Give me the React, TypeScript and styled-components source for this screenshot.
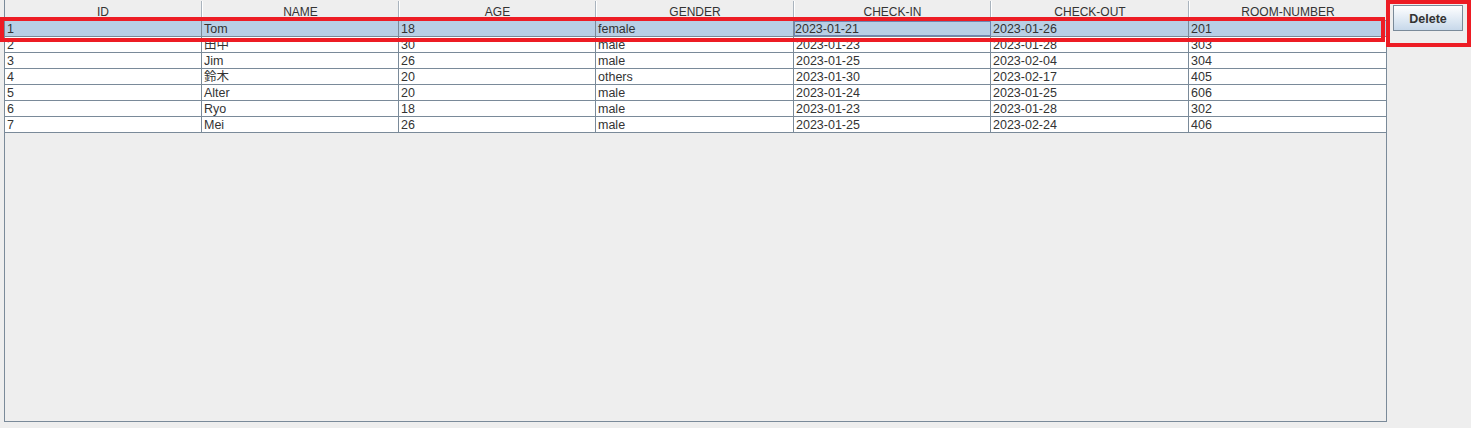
import React from "react";
import styled, { createGlobalStyle } from "styled-components";

const GlobalStyle = createGlobalStyle`
  html, body { margin: 0; padding: 0; background: #eeeeee; }
  body { font-family: "Liberation Sans", Arial, "Noto Sans CJK JP", sans-serif; }
`;

const Page = styled.div`
  position: relative;
  width: 1471px;
  height: 428px;
  display: flex;
  align-items: flex-start;
  padding-left: 4px;
  box-sizing: border-box;
  background: #eeeeee;
`;

const ScrollPane = styled.div`
  width: 1383px;
  height: 422px;
  box-sizing: border-box;
  border: 1px solid #7a8a99;
  border-top: none;
  background: #eeeeee;
  display: flex;
  flex-direction: column;
`;

const COLS = "197px 197px 197px 198px 197px 198px 197px";

const HeaderRow = styled.div`
  display: grid;
  grid-template-columns: ${COLS};
  height: 21px;
  box-sizing: border-box;
  background: #eeeeee;
  border-top: 1px solid #eeeeee;
  border-bottom: 1px solid #7a8a99;
`;

const HeaderCell = styled.div`
  box-sizing: border-box;
  border-right: 1px solid #a9b3bd;
  border-left: 1px solid #ffffff;
  font-size: 12px;
  color: #333333;
  text-align: center;
  line-height: 16px;
  padding-top: 3px;
  white-space: nowrap;
  &:first-child { border-left: none; }
  &:last-child { border-right: none; }
`;

const Row = styled.div<{ $selected?: boolean }>`
  display: grid;
  grid-template-columns: ${COLS};
  height: 16px;
  box-sizing: border-box;
  border-bottom: 1px solid #7a8a99;
  background: ${(p) => (p.$selected ? "#b8cfe5" : "#ffffff")};
`;

const Cell = styled.div<{ $focus?: boolean }>`
  box-sizing: border-box;
  border-right: 1px solid #7a8a99;
  font-size: 12.5px;
  line-height: 15px;
  padding-top: 1px;
  color: #333333;
  padding-left: ${(p) => (p.$focus ? "1px" : "2px")};
  white-space: nowrap;
  overflow: hidden;
  ${(p) => (p.$focus ? "outline: 1px solid #6f87b3; outline-offset: -1px;" : "")}
  &:last-child { border-right: none; }
`;

const Side = styled.div`
  padding: 5px 0 0 6px;
`;

const Button = styled.button`
  width: 70px;
  height: 26px;
  box-sizing: border-box;
  border: 1px solid #7a8a99;
  border-radius: 0;
  background: linear-gradient(to bottom, #ffffff 0%, #eef3f9 30%, #dde8f3 60%, #c7d8ea 100%);
  font-family: "Liberation Sans", Arial, sans-serif;
  font-weight: bold;
  font-size: 12.5px;
  color: #333333;
  padding: 1px 0 0 0;
  cursor: pointer;
`;

const Highlight = styled.div<{ $l: number; $t: number; $w: number; $h: number }>`
  position: absolute;
  left: ${(p) => p.$l}px;
  top: ${(p) => p.$t}px;
  width: ${(p) => p.$w}px;
  height: ${(p) => p.$h}px;
  box-sizing: border-box;
  border: 4px solid #ed1c24;
  pointer-events: none;
`;

const headers = ["ID", "NAME", "AGE", "GENDER", "CHECK-IN", "CHECK-OUT", "ROOM-NUMBER"];
const rows = [
  ["1", "Tom", "18", "female", "2023-01-21", "2023-01-26", "201"],
  ["2", "田中", "30", "male", "2023-01-23", "2023-01-28", "303"],
  ["3", "Jim", "26", "male", "2023-01-25", "2023-02-04", "304"],
  ["4", "鈴木", "20", "others", "2023-01-30", "2023-02-17", "405"],
  ["5", "Alter", "20", "male", "2023-01-24", "2023-01-25", "606"],
  ["6", "Ryo", "18", "male", "2023-01-23", "2023-01-28", "302"],
  ["7", "Mei", "26", "male", "2023-01-25", "2023-02-24", "406"],
];

export default function App() {
  return (
    <>
      <GlobalStyle />
      <Page>
        <ScrollPane>
          <HeaderRow>
            {headers.map((h) => (
              <HeaderCell key={h}>{h}</HeaderCell>
            ))}
          </HeaderRow>
          {rows.map((r, i) => (
            <Row key={r[0]} $selected={i === 0}>
              {r.map((c, j) => (
                <Cell key={j} $focus={i === 0 && j === 4}>
                  {c}
                </Cell>
              ))}
            </Row>
          ))}
        </ScrollPane>
        <Side>
          <Button>Delete</Button>
        </Side>
        <Highlight $l={0} $t={17} $w={1385} $h={25} />
        <Highlight $l={1386} $t={0} $w={85} $h={47} />
      </Page>
    </>
  );
}
